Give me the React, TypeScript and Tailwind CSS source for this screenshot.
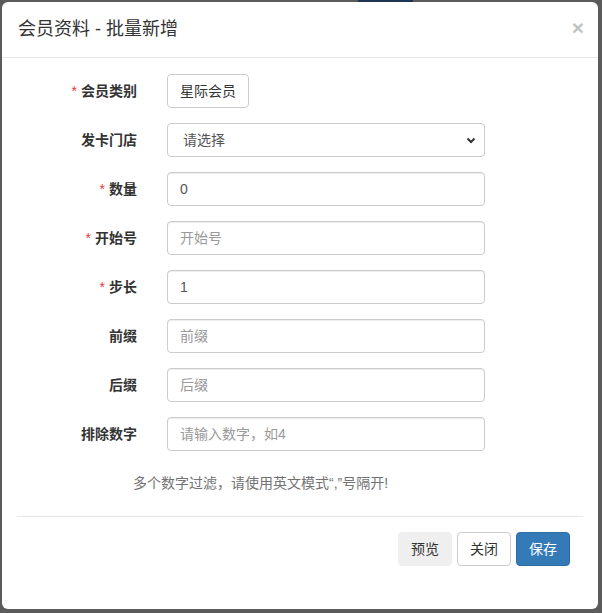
import type { ReactNode } from 'react';

const FONT = '[font-family:"Liberation_Sans","Noto_Sans_CJK_SC",sans-serif]';

interface FieldRowProps {
  label: string;
  required?: boolean;
  children: ReactNode;
}

function FieldRow({ label, required, children }: FieldRowProps) {
  return (
    <div className="flex items-center h-[34px]">
      <label className="w-[120px] shrink-0 text-right text-[14px] font-bold text-[#333]">
        {required && <span className="text-[#e4393c] font-normal mr-[4px]">*</span>}
        {label}
      </label>
      <div className="ml-[30px] w-[318px]">{children}</div>
    </div>
  );
}

function TextInput({ value, placeholder }: { value?: string; placeholder?: string }) {
  return (
    <input
      type="text"
      defaultValue={value}
      placeholder={placeholder}
      className="w-full h-[34px] px-3 border border-[#ccc] rounded-[4px] text-[14px] text-[#555] placeholder-[#999] bg-white outline-none shadow-[inset_0_1px_1px_rgba(0,0,0,0.075)]"
    />
  );
}

export default function App() {
  return (
    <div className={`w-[602px] h-[613px] bg-[#5b5b5b] flex flex-col ${FONT}`}>
      {/* dimmed page behind the dialog */}
      <div className="flex h-[2px] shrink-0">
        <div className="w-[358px] bg-[#5b5b5b]" />
        <div className="w-[55px] bg-[#1c3552]" />
        <div className="flex-1 bg-[#5b5b5b]" />
      </div>

      <div className="ml-[2px] w-[596px] h-[607px] bg-white rounded-[6px] flex flex-col">
        <div className="h-[56px] flex items-center justify-between pl-[16px] pr-[14px] border-b border-[#e5e5e5]">
          <h4 className="text-[18px] text-[#333]">会员资料 - 批量新增</h4>
          <button type="button" className="text-[21px] font-bold leading-none text-[#c2c2c2] -mt-[4px]">
            ×
          </button>
        </div>

        <form className="flex flex-col px-[15px] pt-[16px]">
          <div className="flex flex-col gap-[15px]">
            <FieldRow label="会员类别" required>
              <button
                type="button"
                className="h-[34px] px-3 border border-[#ccc] rounded-[4px] bg-white text-[14px] text-[#333]"
              >
                星际会员
              </button>
            </FieldRow>

            <FieldRow label="发卡门店">
              <div className="relative">
                <select className="w-full h-[34px] pl-[15px] pr-8 border border-[#ccc] rounded-[4px] text-[14px] text-[#555] bg-white appearance-none outline-none">
                  <option>请选择</option>
                </select>
                <svg
                  className="absolute right-[9px] top-1/2 -translate-y-1/2 w-[10px] h-[10px] text-[#333] pointer-events-none"
                  viewBox="0 0 10 10"
                  fill="none"
                  stroke="currentColor"
                  strokeWidth={2}
                >
                  <path d="M1.5 3.5 5 7l3.5-3.5" />
                </svg>
              </div>
            </FieldRow>

            <FieldRow label="数量" required>
              <TextInput value="0" />
            </FieldRow>

            <FieldRow label="开始号" required>
              <TextInput placeholder="开始号" />
            </FieldRow>

            <FieldRow label="步长" required>
              <TextInput value="1" />
            </FieldRow>

            <FieldRow label="前缀">
              <TextInput placeholder="前缀" />
            </FieldRow>

            <FieldRow label="后缀">
              <TextInput placeholder="后缀" />
            </FieldRow>

            <FieldRow label="排除数字">
              <TextInput placeholder="请输入数字，如4" />
            </FieldRow>
          </div>

          <p className="ml-[116px] mt-[22px] text-[14px] text-[#737373] leading-[20px]">
            多个数字过滤，请使用英文模式“,”号隔开!
          </p>

          <div className="mt-[23px] border-t border-[#e5e5e5] pt-[15px] pr-[13px] flex justify-end gap-[5px]">
            <button
              type="button"
              className="h-[34px] w-[54px] rounded-[4px] border border-[#efefef] bg-[#efefef] text-[14px] text-[#333]"
            >
              预览
            </button>
            <button
              type="button"
              className="h-[34px] w-[54px] rounded-[4px] border border-[#ccc] bg-white text-[14px] text-[#333]"
            >
              关闭
            </button>
            <button
              type="button"
              className="h-[34px] w-[54px] rounded-[4px] border border-[#2e6da4] bg-[#337ab7] text-[14px] text-white"
            >
              保存
            </button>
          </div>
        </form>
      </div>
    </div>
  );
}
